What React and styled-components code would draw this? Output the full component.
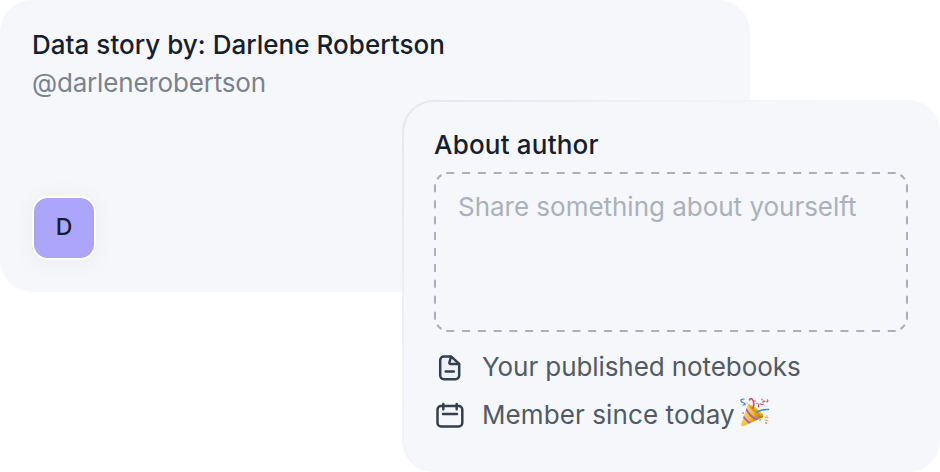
import React from "react";
import styled, { createGlobalStyle } from "styled-components";

const GlobalStyle = createGlobalStyle`
  * { box-sizing: border-box; }
  body {
    margin: 0;
    background: #fff;
    font-family: Inter, "Liberation Sans", sans-serif;
    -webkit-font-smoothing: antialiased;
  }
  h2, p { margin: 0; font-weight: 400; }
`;

const Stage = styled.main`
  display: grid;
  grid-template-columns: 402px 348px 190px;
  grid-template-rows: 100px 192px 180px;
  width: 940px;
  height: 472px;
  overflow: hidden;
`;

const ProfileCard = styled.section`
  grid-area: 1 / 1 / 3 / 3;
  display: flex;
  flex-direction: column;
  align-items: flex-start;
  padding: 26px 32px;
  border-radius: 32px;
  background: #f5f7fb;
`;

const AuthorCard = styled.section`
  grid-area: 2 / 2 / 4 / 4;
  z-index: 1;
  display: flex;
  flex-direction: column;
  padding: 24px 30px;
  border: 2px solid transparent;
  border-radius: 32px;
  background:
    linear-gradient(#f5f7fb, #f5f7fb) padding-box,
    linear-gradient(135deg, #e3e7ee 0%, #f5f7fb 46%) border-box;
`;

const Heading = styled.h2`
  font-size: 26px;
  line-height: 38px;
  font-weight: 500;
  white-space: nowrap;
  color: #15202e;
  letter-spacing: ${(p) => p.$tracking};
`;

const Handle = styled.p`
  font-size: 26px;
  line-height: 38px;
  color: #7b828e;
  letter-spacing: -0.18px;
`;

const Avatar = styled.div`
  display: grid;
  place-items: center;
  width: 64px;
  height: 64px;
  margin-top: 94px;
  border: 2px solid #fff;
  border-radius: 16px;
  background: #aca5fb;
  color: #15202e;
  font-size: 23px;
  font-weight: 500;
  line-height: 24px;
  padding-bottom: 2px;
  box-shadow: 0 2px 24px rgba(20, 25, 40, 0.05);
`;

const BioField = styled.div`
  position: relative;
  width: 474px;
  height: 160px;
  margin-top: 8px;
  padding: 16px 24px;
`;

const DashedOutline = styled.svg`
  position: absolute;
  inset: 0;
  fill: none;
  stroke: #aab1bd;
  stroke-width: 2;
`;

const Placeholder = styled.p`
  font-size: 26px;
  line-height: 38px;
  white-space: nowrap;
  color: #aab1bd;
  letter-spacing: -0.02px;
`;

const FactList = styled.div`
  display: flex;
  flex-direction: column;
  margin-top: 12px;
`;

const Fact = styled.div`
  display: flex;
  align-items: center;
  height: 48px;
`;

const FactIcon = styled.svg`
  width: 32px;
  height: 32px;
  margin-right: 16px;
  fill: none;
  stroke: #333f4e;
  stroke-width: 2.5;
  stroke-linecap: round;
  stroke-linejoin: round;
`;

const FactText = styled.p`
  margin-bottom: 2px;
  font-size: 26px;
  line-height: 38px;
  white-space: nowrap;
  color: #505a68;
  letter-spacing: ${(p) => p.$tracking};
`;

const PartyIcon = styled.svg`
  width: 30px;
  height: 30px;
  margin: -6px 0 0 5px;
`;

function BioOutline() {
  return (
    <DashedOutline width="474" height="160" viewBox="0 0 474 160">
      <path d="M12.3 1H461.7M12.3 159H461.7" strokeDasharray="8 7.765" />
      <path d="M1 12.3V147.7M473 12.3V147.7" strokeDasharray="8 7.925" />
      <path d="M3.2 7.2Q4.8 4.5 7.6 3M466.4 3Q469.2 4.5 470.8 7.2M470.8 152.8Q469.2 155.5 466.4 157M7.6 157Q4.8 155.5 3.2 152.8" />
    </DashedOutline>
  );
}

function NotebookIcon() {
  return (
    <FactIcon viewBox="0 0 32 32">
      <path fill="#edf0f5" d="M17.3 4.6H9.8A3.6 3.6 0 0 0 6.2 8.2V23.6A3.6 3.6 0 0 0 9.8 27.2H21.6A3.6 3.6 0 0 0 25.2 23.6V11.8Z" />
      <path d="M17 5 15.4 10.4Q15 12 16.6 12H25M11.7 19.4H19.8" />
    </FactIcon>
  );
}

function CalendarIcon() {
  return (
    <FactIcon viewBox="0 0 32 32">
      <rect x="3.5" y="6" width="24.8" height="20.4" rx="3.5" />
      <path d="M9.3 4V9.2M22.7 4V9.2M9 14H23" />
    </FactIcon>
  );
}

function PartyPopper() {
  return (
    <PartyIcon viewBox="0 0 30 30" fill="none" strokeLinecap="round" strokeLinejoin="round">
      <defs>
        <linearGradient id="cone" x1="4" y1="15" x2="18" y2="23" gradientUnits="userSpaceOnUse">
          <stop stopColor="#ffdc47" />
          <stop offset=".5" stopColor="#f3bd28" />
          <stop offset="1" stopColor="#b97713" />
        </linearGradient>
        <clipPath id="coneClip">
          <path d="M8 6Q16 8 23 17Q24 20 21 20L4 28Q1 29 1 26Z" />
        </clipPath>
      </defs>
      <path d="M8 6Q16 8 23 17Q24 20 21 20L4 28Q1 29 1 26Z" fill="url(#cone)" />
      <g clipPath="url(#coneClip)" stroke="#a55dd2" strokeWidth="1.8">
        <path d="M6 11Q11 20 18 22M3 18Q7 24 12 26" />
      </g>
      <path d="M8 6Q16 8 23 17Q23 20 20 18Q11 14 8 6Z" fill="#d79a20" />
      <path d="M9 7Q16 9 21 16" stroke="#f5c84a" strokeWidth="1.2" />
      <path d="M13 10Q15 4 12 1Q10 0 9.5 2" stroke="#f0445b" strokeWidth="1.6" />
      <path d="M17 14Q22 11 28.5 11.5" stroke="#4689e5" strokeWidth="1.6" />
      <path d="M4 1Q0 1 1 3T4 5Q7 7 3 7" stroke="#4178d7" strokeWidth="1.2" />
      <path d="M18.5 9Q18 5 21 6Q24 8 23 4Q23 2 26 4Q29 4 27 1" stroke="#ed4261" strokeWidth="1.2" strokeDasharray="3 1.6" />
      <path d="M7 5h.1M21 20.5h.1M27 18h.1" stroke="#efbd38" strokeWidth="1.6" />
      <path d="M15 3h.1M17 5.5h.1M20 22h.1" stroke="#4682dc" strokeWidth="1.6" />
      <path d="M3 15h.1M22 1.5h.1M26 25h.1" stroke="#ef779a" strokeWidth="1.8" />
      <path d="m25 20 1-1 2 .5M25 22l3 1" stroke="#f09a51" strokeWidth="1" />
    </PartyIcon>
  );
}

export default function App() {
  return (
    <>
      <GlobalStyle />
      <Stage>
        <ProfileCard>
          <Heading $tracking="0.03px">Data story by: Darlene Robertson</Heading>
          <Handle>@darlenerobertson</Handle>
          <Avatar>D</Avatar>
        </ProfileCard>
        <AuthorCard>
          <Heading $tracking="0.2px">About author</Heading>
          <BioField>
            <BioOutline />
            <Placeholder>Share something about yourselft</Placeholder>
          </BioField>
          <FactList>
            <Fact>
              <NotebookIcon />
              <FactText $tracking="-0.08px">Your published notebooks</FactText>
            </Fact>
            <Fact>
              <CalendarIcon />
              <FactText $tracking="0.1px">Member since today</FactText>
              <PartyPopper />
            </Fact>
          </FactList>
        </AuthorCard>
      </Stage>
    </>
  );
}
